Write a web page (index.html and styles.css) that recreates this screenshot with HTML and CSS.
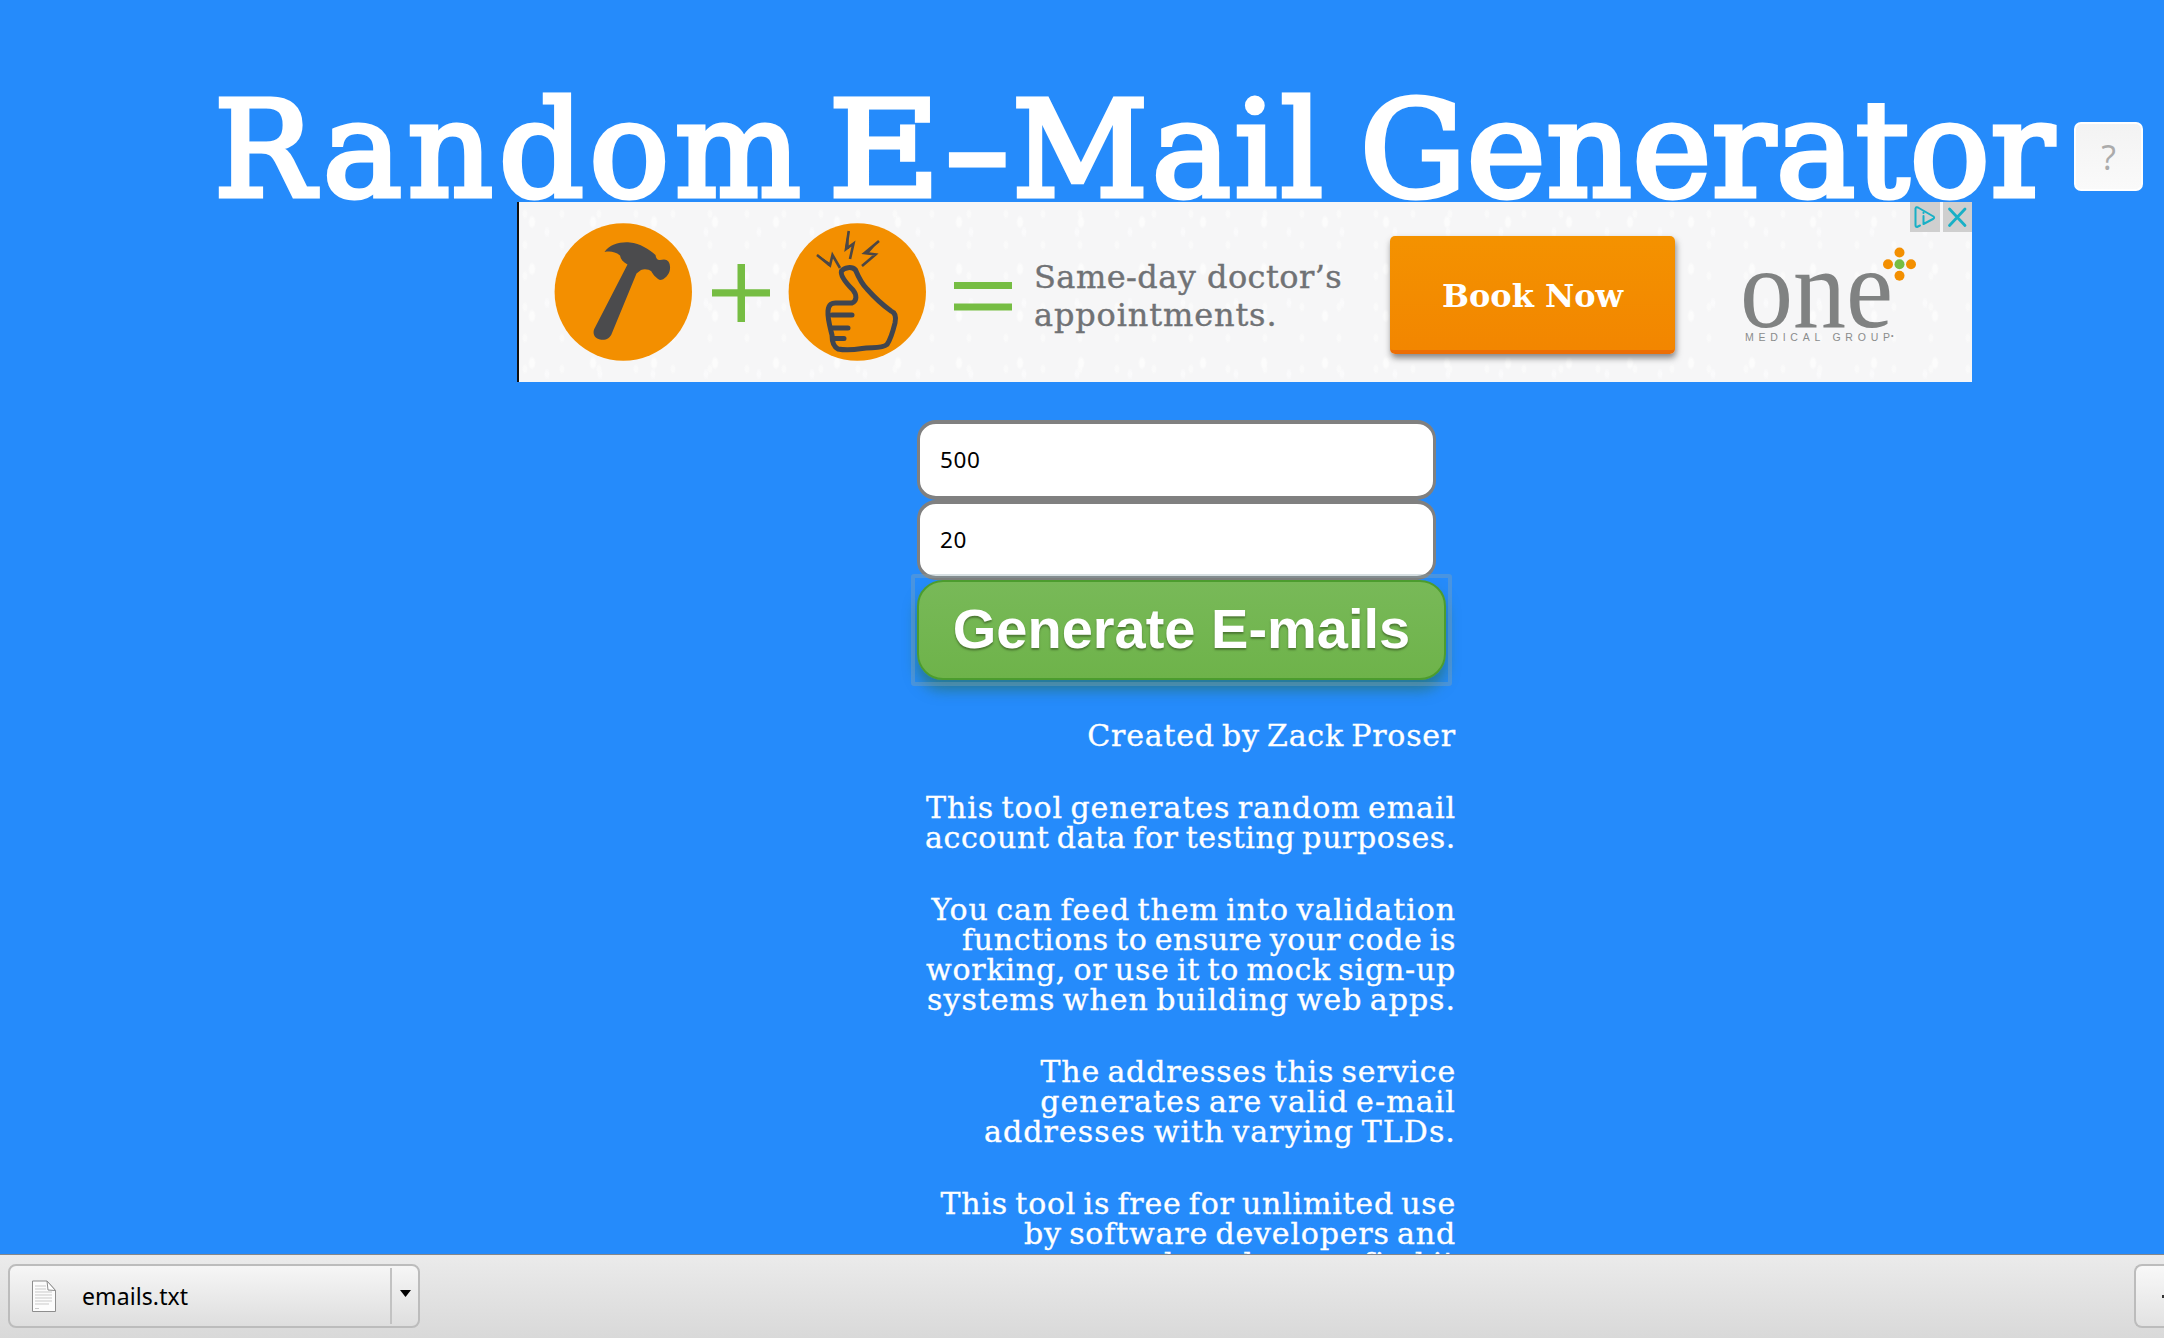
FILE: index.html
```
<!DOCTYPE html>
<html lang="en">
<head>
<meta charset="utf-8">
<title>Random E-Mail Generator</title>
<link rel="stylesheet" href="styles.css">
</head>
<body>
<main class="page">
  <header class="masthead">
    <h1 class="title"><span class="w-random">Random</span> <span class="w-email"><span class="wide-e">E</span><span class="wide-dash">-</span>Mail</span> <span class="w-generator">Generator</span></h1>
    <button class="help" type="button">?</button>
  </header>

  <section class="ad">
    <svg class="ad-art" width="513" height="180" viewBox="517 202 513 180">
      <circle cx="623.3" cy="292" r="68.7" fill="#f38f00"/>
      <path fill="#4b4b4d" d="M604.500 252C610 244 621 241.500 630 242.500C640 243.500 649 249 655.500 255C656 259 658 260.500 660 260L664 259.500C668 259.500 670.500 263 670 269C669.500 275 664 280 660 280C656 278 652.500 274 651.500 271.500C649 269.500 645 268.500 641 270L636.500 273.500L612 333C610 339 605 340.500 600 339.500C595 338.500 592.500 334.500 594 329.500L627.500 264.500C623 262 620.500 259 620 255.500C615 251.500 610 251 604.500 252Z"/>
      <path fill="#76bd43" d="M737.500 264h7.500v25.300h25v7.300h-25V322h-7.500v-25.400H712v-7.300h25.500zM954 282h58v7h-58zM954 303.500h58v7h-58z"/>
      <circle cx="857.300" cy="292" r="68.700" fill="#f38f00"/>
      <g fill="none" stroke="#3f4550" stroke-width="5" stroke-linejoin="round" stroke-linecap="round">
        <path d="M852 303C857 301 857 295 853 290C846 283 840 276 841.500 271C844 267.500 852 266 855.500 270C858 276 861 283 867 289C875 298 884 306 891 311C895 312.500 896.500 316 895 323C893 331 889.500 341 887 344.500C882 349 872 347 862 348.500C853 350 843 350 838 349C834 347 832 341 832 335C830 327 827.500 319 828 311C828.500 304 832 302.500 837 303Z"/>
        <path d="M832 315h20M832 328h16M834 338.500h10"/>
      </g>
      <path fill="none" stroke="#4c4745" stroke-width="2.600" d="M848.800 231L846 249L853.500 243.500L850 259M879 241L864.500 253L875.500 254.500L862 266M817 255L830 265.500L832.500 255L840 268"/>
      <path fill="#4c4745" d="M848 231l-3 18 4 0zM879 241l-16 13 5 0zM816.500 254l12 12 3-2z"/>
    </svg>
    <p class="ad-copy"><span class="copy-one">Same-day doctor’s</span><span class="copy-two">appointments.</span></p>
    <a class="book">Book Now</a>
    <svg class="ad-logo" width="180" height="110" viewBox="1740 242 180 110">
      <text class="logo-one" x="1740" y="327" textLength="153" lengthAdjust="spacingAndGlyphs">one</text>
      <text class="logo-sub" x="1745" y="341" textLength="145">MEDICAL GROUP</text>
      <text class="logo-tm" x="1891" y="338">•</text>
      <g fill="#f38f00"><circle cx="1899.500" cy="252.500" r="5"/><circle cx="1899.500" cy="275.800" r="5"/><circle cx="1888" cy="264.200" r="5"/><circle cx="1911" cy="264.200" r="5"/></g>
      <circle cx="1899.500" cy="264.200" r="5" fill="#76bd43"/>
    </svg>
    <div class="ad-controls">
      <svg width="30" height="30" viewBox="0 0 30 30"><g fill="none" stroke="#18b0c6" stroke-width="2" stroke-linejoin="round" stroke-linecap="round"><path d="M10 23.500L7 25Q5.500 25 5.500 23V6.500Q6 4.500 8 5.500L23.500 14.500Q25 16 23 17L13.500 22V14"/><path d="M13.500 10.500v.6"/></g></svg>
      <svg width="29" height="30" viewBox="0 0 29 30"><path d="M6.500 7L22 23.500M22 7L6.500 23.500" fill="none" stroke="#18b0c6" stroke-width="2.800" stroke-linecap="round"/></svg>
    </div>
  </section>

  <form class="generator">
    <input class="field" type="text" value="500">
    <input class="field" type="text" value="20">
    <button class="generate" type="button">Generate E-mails</button>
  </form>

  <section class="about">
    <p><span class="s30">Created by Zack Proser</span></p>
    <p><span class="s55">This tool generates random email</span> <span class="s15">account data for testing purposes.</span></p>
    <p><span class="s55">You can feed them into validation</span> <span class="s20">functions to ensure your code is</span> <span class="s30">working, or use it to mock sign-up</span> <span class="s50">systems when building web apps.</span></p>
    <p><span class="s45">The addresses this service</span> <span class="s70">generates are valid e-mail</span> <span class="s70">addresses with varying TLDs.</span></p>
    <p><span class="s30">This tool is free for unlimited use</span> <span class="s45">by software developers and</span> <span class="s45">anyone else who may find it</span></p>
  </section>
</main>

<footer class="shelf">
  <div class="download">
    <svg class="file" width="26" height="33" viewBox="0 0 26 33"><path d="M1.500 1H16L24.500 10.500V31.500H1.500Z" fill="#fcfcfc" stroke="#8d8d8d"/><path d="M4 6h11M4 9h11M4 12h17M4 15h17M4 18h17M4 21h17M4 24h14M4 28.500h4" stroke="#c9c9c9"/><path d="M16 1L17 10L24.500 10.500Z" fill="#fff" stroke="#8d8d8d"/></svg>
    <span class="filename">emails.txt</span>
    <span class="menu"><svg width="11" height="7" viewBox="0 0 11 7"><path d="M0 0H11L5.500 7Z"/></svg></span>
  </div>
  <div class="show-all"><span class="tip"></span></div>
</footer>
</body>
</html>
```
FILE: styles.css
```
* { box-sizing: border-box; }

body {
  margin: 0;
  height: 1338px;
  display: flex;
  flex-direction: column;
  overflow: hidden;
  background: #258bfb;
  color: #fff;
}

.page {
  height: 1254px;
  padding-top: 84px;
  overflow: hidden;
}

/* Masthead */
.masthead {
  display: flex;
  align-items: flex-start;
  height: 118px;
  padding-left: 214px;
}

.title {
  display: grid;
  grid-template-columns: 614px 532px 714px;
  margin: 0;
  font: 400 133px/133px "DejaVu Serif", serif;
  -webkit-text-stroke: 5px #fff;
  paint-order: stroke fill;
  stroke-linejoin: round;
  white-space: nowrap;
}

.w-random { letter-spacing: 5.500px; }
.w-email { letter-spacing: 3.500px; }
.w-generator { letter-spacing: 0.600px; }

.wide-e,
.wide-dash {
  display: inline-block;
  transform-origin: 0 50%;
}

.wide-e {
  margin-right: 15px;
  transform: scaleX(1.160);
}

.wide-dash {
  margin-right: 20px;
  transform: scaleX(1.480);
}

.help {
  width: 69px;
  height: 69px;
  margin-top: 38px;
  padding: 0;
  border: 2px solid #fff;
  border-radius: 7px;
  background: linear-gradient(#f3f3f3, #fafafa);
  color: #ababab;
  font: 400 34px/58px "Open Sans", sans-serif;
}

/* Banner */
.ad {
  position: relative;
  display: flex;
  width: 1455px;
  height: 180px;
  margin-left: 517px;
  background-color: #f6f6f7;
  background-image:
    radial-gradient(ellipse 4px 7px at 15px 20px, #fcfcfc 50%, transparent),
    radial-gradient(ellipse 3px 5px at 8px 12px, #fafafa 50%, transparent),
    radial-gradient(ellipse 3px 6px at 30px 30px, #fafafb 50%, transparent);
  background-size: 61px 47px, 37px 31px, 53px 71px;
  box-shadow: inset 2px 0 #111;
}

.ad-art { display: block; flex: none; }

.ad-copy {
  display: flex;
  flex-direction: column;
  width: 356px;
  margin: 57px 0 0 4px;
  color: #707275;
  font: 32px/37.500px "DejaVu Serif", serif;
  -webkit-text-stroke: 0.400px #707275;
  white-space: nowrap;
}

.copy-one { letter-spacing: 0.450px; }
.copy-two { letter-spacing: 0.850px; }

.book {
  width: 285px;
  height: 118px;
  margin-top: 34px;
  border-bottom: 4px solid #ec6e05;
  border-radius: 5px;
  background: linear-gradient(#f49200, #f28600);
  box-shadow: 1px 4px 6px rgba(60, 60, 60, 0.600);
  font: 700 32px/120px "DejaVu Serif", serif;
  text-align: center;
}

.ad-logo { display: block; margin: 40px 0 0 65px; }
.logo-one { fill: #808282; font: 115px "Liberation Serif", serif; }
.logo-sub { fill: #8a8c8c; font: 10.500px "Liberation Sans", sans-serif; }
.logo-tm { fill: #8a8c8c; font: 7px "Liberation Sans", sans-serif; }

.ad-controls {
  position: absolute;
  top: 0;
  right: 0;
  display: flex;
  gap: 3px;
}

.ad-controls svg { display: block; background: #cfcfcf; }

/* Form */
.generator {
  display: flex;
  flex-direction: column;
  width: 529px;
  margin: 38px 0 0 917px;
}

.field {
  width: 519px;
  height: 80px;
  padding: 0 20px 2px;
  border: solid #808080;
  border-width: 4px 3px;
  border-radius: 19px;
  background: #fff;
  color: #000;
  font: 22.500px "Noto Sans", sans-serif;
  letter-spacing: 0.600px;
}

.generate {
  position: relative;
  height: 100px;
  padding: 0 0 4px;
  border: 2px solid #4c9c2e;
  border-radius: 26px;
  background: linear-gradient(#78b958, #6eb34a);
  box-shadow: 0 10px 14px rgba(40, 110, 80, 0.600);
  color: #fff;
  font: 700 56px "Liberation Sans", Arial, sans-serif;
  text-shadow: 0 2px 2px rgba(50, 80, 30, 0.600);
  white-space: nowrap;
}

/* Square focus ring around the rounded button */
.generate::after {
  content: "";
  position: absolute;
  inset: -8px;
  border: 4px solid rgba(140, 165, 175, 0.350);
  border-radius: 3px;
}

/* Description */
.about {
  display: flex;
  flex-direction: column;
  gap: 42px;
  width: 556px;
  margin: 40.500px 0 0 900px;
  font: 30px/30px "DejaVu Serif", serif;
  word-spacing: -3px;
  -webkit-text-stroke: 0.350px #fff;
}

.about p {
  display: flex;
  flex-direction: column;
  align-items: flex-end;
  margin: 0;
  white-space: nowrap;
}

.s15 { letter-spacing: 0.600px; }
.s20 { letter-spacing: 0.650px; }
.s30 { letter-spacing: 0.780px; }
.s45 { letter-spacing: 0.830px; }
.s50 { letter-spacing: 0.980px; }
.s55 { letter-spacing: 0.930px; }
.s70 { letter-spacing: 1.080px; }

/* Download shelf */
.shelf {
  display: flex;
  justify-content: space-between;
  align-items: flex-start;
  height: 84px;
  padding: 9px 0 0 8px;
  border-top: 1px solid #85888c;
  background: linear-gradient(#ebebeb, #d9d9d9);
  color: #000;
}

.download {
  display: flex;
  align-items: center;
  width: 412px;
  height: 64px;
  padding-left: 21px;
  border: 2px solid #bcbcbc;
  border-radius: 8px;
  background: linear-gradient(#f6f6f6, #dedede);
}

.filename {
  margin-left: 25px;
  font: 23px "Noto Sans", sans-serif;
  letter-spacing: 0.100px;
}

.menu {
  display: flex;
  justify-content: center;
  align-items: center;
  width: 28px;
  height: 56px;
  margin-left: auto;
  padding-bottom: 6px;
  border-left: 2px solid #c2c2c2;
}

.show-all {
  display: flex;
  align-items: center;
  justify-content: flex-end;
  width: 30px;
  height: 64px;
  border: 2px solid #bcbcbc;
  border-right: 0;
  border-radius: 8px 0 0 8px;
  background: linear-gradient(#f8f8f8, #e2e2e2);
}

.tip { width: 2px; height: 3px; background: #333; }
```
